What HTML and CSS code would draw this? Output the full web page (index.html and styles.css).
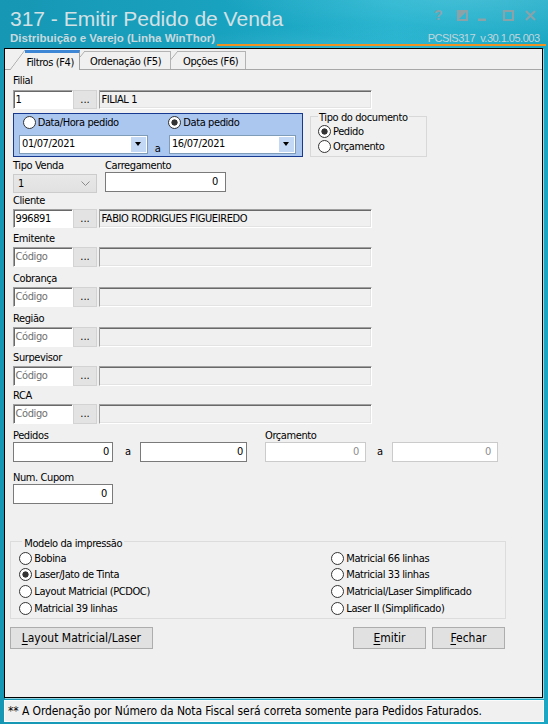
FILE: index.html
```html
<!DOCTYPE html>
<html lang="pt-BR">
<head>
<meta charset="utf-8">
<title>317 - Emitir Pedido de Venda</title>
<link rel="stylesheet" href="styles.css">
</head>
<body>
<div class="window">
  <header class="titlebar">
    <div class="title-row">
      <h1 class="title">317 - Emitir Pedido de Venda</h1>
      <div class="controls">
        <span class="ctl-help">?</span>
        <svg class="ctl ctl-dock" width="11" height="11" viewBox="0 0 11 11"><rect x="1" y="1" width="9" height="9" fill="none" stroke="currentColor" stroke-width="2"/><polygon points="0,0 11,0 0,11" fill="currentColor"/></svg>
        <svg class="ctl ctl-min" width="8" height="11" viewBox="0 0 8 11"><rect x="0" y="8.5" width="8" height="2.5" fill="currentColor"/></svg>
        <svg class="ctl ctl-max" width="11" height="11" viewBox="0 0 11 11"><rect x="1" y="1" width="9" height="9" fill="none" stroke="currentColor" stroke-width="2"/></svg>
        <svg class="ctl ctl-close" width="11" height="11" viewBox="0 0 11 11"><path d="M1 1 L10 10 M10 1 L1 10" stroke="currentColor" stroke-width="2"/></svg>
      </div>
    </div>
    <div class="sub-row">
      <span class="subtitle">Distribuição e Varejo (Linha WinThor)</span>
      <span class="version">PCSIS317&nbsp;&nbsp;v.30.1.05.003</span>
    </div>
  </header>

  <main class="panel">
    <nav class="tabs">
      <div class="tab active">Filtros (F4)</div>
      <div class="tab tab-order">Ordenação (F5)</div>
      <div class="tab tab-options">Opções (F6)</div>
    </nav>

    <section class="page">
      <div class="field f-filial">
        <div class="lbl">Filial</div>
        <div class="lookup short">
          <div class="code">1</div>
          <div class="pick">...</div>
          <div class="desc">FILIAL 1</div>
        </div>
      </div>

      <div class="period-row">
        <div class="period">
          <div class="period-options">
            <div class="radio first"><span class="dot"></span>Data/Hora pedido</div>
            <div class="radio"><span class="dot on"></span>Data pedido</div>
          </div>
          <div class="period-dates">
            <div class="date"><span class="date-val">01/07/2021</span><span class="drop"><span class="arrow"></span></span></div>
            <span class="between">a</span>
            <div class="date date-end"><span class="date-val">16/07/2021</span><span class="drop"><span class="arrow"></span></span></div>
          </div>
        </div>
        <fieldset class="group doc-type">
          <legend>Tipo do documento</legend>
          <div class="radio"><span class="dot on"></span>Pedido</div>
          <div class="radio"><span class="dot"></span>Orçamento</div>
        </fieldset>
      </div>

      <div class="sale-row">
        <div class="col-type">
          <div class="lbl">Tipo Venda</div>
          <div class="combo"><span>1</span>
            <svg class="chev" width="9" height="5" viewBox="0 0 9 5"><polyline points="0.5,0.5 4.5,4.5 8.5,0.5" fill="none" stroke="#8a8a8a" stroke-width="1"/></svg>
          </div>
        </div>
        <div class="col-load">
          <div class="lbl">Carregamento</div>
          <div class="num load">0</div>
        </div>
      </div>

      <div class="field f-cliente">
        <div class="lbl">Cliente</div>
        <div class="lookup short">
          <div class="code">996891</div>
          <div class="pick">...</div>
          <div class="desc">FABIO RODRIGUES FIGUEIREDO</div>
        </div>
      </div>

      <div class="field f-emitente">
        <div class="lbl">Emitente</div>
        <div class="lookup">
          <div class="code empty">Código</div>
          <div class="pick">...</div>
          <div class="desc"></div>
        </div>
      </div>

      <div class="field f-step">
        <div class="lbl">Cobrança</div>
        <div class="lookup">
          <div class="code empty">Código</div>
          <div class="pick">...</div>
          <div class="desc"></div>
        </div>
      </div>

      <div class="field f-step">
        <div class="lbl">Região</div>
        <div class="lookup">
          <div class="code empty">Código</div>
          <div class="pick">...</div>
          <div class="desc"></div>
        </div>
      </div>

      <div class="field f-step">
        <div class="lbl">Surpevisor</div>
        <div class="lookup">
          <div class="code empty">Código</div>
          <div class="pick">...</div>
          <div class="desc"></div>
        </div>
      </div>

      <div class="field f-rca">
        <div class="lbl">RCA</div>
        <div class="lookup">
          <div class="code empty">Código</div>
          <div class="pick">...</div>
          <div class="desc"></div>
        </div>
      </div>

      <div class="range-row">
        <div class="range orders">
          <div class="lbl tight">Pedidos</div>
          <div class="range-inputs">
            <div class="num from">0</div>
            <span class="to">a</span>
            <div class="num until">0</div>
          </div>
        </div>
        <div class="range quotes">
          <div class="lbl tight">Orçamento</div>
          <div class="range-inputs">
            <div class="num off from">0</div>
            <span class="to">a</span>
            <div class="num off until">0</div>
          </div>
        </div>
      </div>

      <div class="field f-cupom">
        <div class="lbl tight">Num. Cupom</div>
        <div class="num coupon">0</div>
      </div>

      <fieldset class="group layout-group">
        <legend>Modelo da impressão</legend>
        <div class="layout-grid">
          <div class="radio"><span class="dot"></span>Bobina</div>
          <div class="radio"><span class="dot on"></span>Laser/Jato de Tinta</div>
          <div class="radio"><span class="dot"></span>Layout Matricial (PCDOC)</div>
          <div class="radio"><span class="dot"></span>Matricial 39 linhas</div>
          <div class="radio"><span class="dot"></span>Matricial 66 linhas</div>
          <div class="radio"><span class="dot"></span>Matricial 33 linhas</div>
          <div class="radio"><span class="dot"></span>Matricial/Laser Simplificado</div>
          <div class="radio"><span class="dot"></span>Laser II (Simplificado)</div>
        </div>
      </fieldset>

      <div class="actions">
        <button class="btn btn-layout"><u>L</u>ayout Matricial/Laser</button>
        <button class="btn btn-emit"><u>E</u>mitir</button>
        <button class="btn btn-close"><u>F</u>echar</button>
      </div>
    </section>
  </main>

  <footer class="status">** A Ordenação por Número da Nota Fiscal será correta somente para Pedidos Faturados.</footer>
</div>
</body>
</html>
```

FILE: styles.css
```css
* { box-sizing: border-box; }

html, body {
  margin: 0;
  padding: 0;
}

body {
  width: 548px;
  height: 724px;
  overflow: hidden;
  font-family: "DejaVu Sans Condensed", "DejaVu Sans", sans-serif;
  font-size: 11px;
  letter-spacing: -0.4px;
  color: #000;
}

/* ---------- window frame ---------- */
.window {
  width: 548px;
  height: 724px;
  display: flex;
  flex-direction: column;
  background:
    radial-gradient(ellipse 330px 70px at 470px -8px, rgba(150, 230, 245, 0.35), rgba(150, 230, 245, 0) 75%),
    radial-gradient(ellipse 260px 40px at 360px 52px, rgba(120, 215, 235, 0.25), rgba(120, 215, 235, 0) 70%),
    linear-gradient(90deg, #1697b4 0%, #19a2bf 40%, #1eafcb 72%, #1ba7c3 100%);
}

.titlebar {
  flex: none;
  height: 48px;
  padding: 8px 0 0 10px;
}

.title-row {
  display: flex;
  justify-content: space-between;
  align-items: flex-start;
  height: 24px;
}

.title {
  margin: 0;
  font: 400 21px/21px "Liberation Sans", Arial, sans-serif;
  letter-spacing: 0;
  color: #d3e1e5;
  white-space: nowrap;
}

.controls {
  display: flex;
  align-items: flex-start;
  margin-right: 12px;
  color: #8ba2a9;
}

.ctl-help {
  font: 700 14px/14px "Liberation Sans", Arial, sans-serif;
  letter-spacing: 0;
}

.ctl { display: block; margin-top: 1.5px; }
.ctl-dock { margin-left: 14px; }
.ctl-min { margin-left: 10.5px; }
.ctl-max { margin-left: 16.5px; }
.ctl-close { margin-left: 11.5px; }

.sub-row {
  display: flex;
  align-items: flex-start;
  margin-right: 2px;
  letter-spacing: 0;
}

.subtitle {
  font: 700 11.5px/12px "Liberation Sans", Arial, sans-serif;
  color: #c8d9de;
  white-space: nowrap;
}

.version {
  flex: 1;
  margin-left: 2px;
  padding-right: 6.5px;
  text-align: right;
  font: 400 11px/12px "Liberation Sans", Arial, sans-serif;
  letter-spacing: -0.5px;
  color: #c3d6dc;
  border-bottom: 2px solid #f0901e;
  white-space: nowrap;
}

/* ---------- main panel ---------- */
.panel {
  flex: none;
  height: 650px;
  margin: 0 5px 0 4px;
  border: 1px solid #000;
  background: #f0f0f0;
  box-shadow: 1px 1px 0 rgba(255, 255, 255, 0.55);
  display: flex;
  flex-direction: column;
}

.tabs {
  flex: none;
  display: flex;
  height: 21px;
  padding-left: 20px;
  border-bottom: 1px solid #a7a7a7;
}

.tab {
  position: relative;
  height: 18px;
  margin-top: 2px;
  padding: 2px 0 0 5px;
  line-height: 15px;
  background: #f0f0f0;
  border-top: 1px solid #b3b3b3;
  border-right: 1px solid #b3b3b3;
  white-space: nowrap;
}

/* slanted left edge of each tab */
.tab::before {
  content: "";
  position: absolute;
  left: -15px;
  top: -1px;
  bottom: 0;
  width: 15px;
  background: linear-gradient(to bottom right, rgba(240, 240, 240, 0) calc(50% - 0.7px), #a9a9a9 50%, #f0f0f0 calc(50% + 0.7px));
}

.tab.active {
  z-index: 3;
  width: 55px;
  height: 20px;
  margin-top: 1px;
  padding: 2px 0 0 1.5px;
  border-top: 3px solid #3d86d6;
  border-right-color: #a0a0a0;
}

.tab.active::before { top: -3px; }

.tab-order {
  z-index: 2;
  width: 86px;
  margin-left: 5px;
}

.tab-options {
  z-index: 1;
  width: 68px;
  margin-left: 7px;
}

.page {
  flex: 1;
  padding: 3px 8px 0 8px;
}

/* ---------- labels and edit controls ---------- */
.lbl {
  line-height: 16px;
  white-space: nowrap;
}

.lbl.tight { line-height: 12px; }

.lookup {
  display: flex;
  height: 20px;
}

.lookup.short { height: 19px; }

.f-filial .lookup { margin-top: 1px; }

.code {
  width: 60px;
  padding-left: 1.5px;
  line-height: 18px;
  background: #fff;
  border: 1px solid;
  border-color: #a0a0a0 #fff #fff #a0a0a0;
  box-shadow: inset 1px 1px 0 #696969;
  white-space: nowrap;
  overflow: hidden;
}

.code.empty { color: #6e6e6e; }

.pick {
  width: 24px;
  text-align: center;
  line-height: 17px;
  background: #e3e3e3;
  border: 1px solid #d3d3d3;
  letter-spacing: 0;
}

.desc {
  width: 273px;
  margin-left: 2px;
  padding-left: 1.5px;
  line-height: 17px;
  background: #f0f0f0;
  border: 1px solid;
  border-color: #a0a0a0 #fff #fff #a0a0a0;
  box-shadow: inset 0 1px 0 #696969, inset -1px -1px 0 #e3e3e3;
  white-space: nowrap;
}

.lookup.short .code,
.lookup.short .desc { line-height: 17px; }

/* ---------- period box ---------- */
.period-row {
  display: flex;
  align-items: flex-start;
}

.period {
  width: 290px;
  height: 44.8px;
  margin-top: 3.5px;
  background: #abc7f0;
  border: 1px solid #17398f;
}

.period-options {
  display: flex;
  height: 13px;
  margin-top: 2px;
  padding-left: 8.7px;
}

.period-options .radio.first { width: 145.6px; }

.period-dates {
  display: flex;
  align-items: flex-start;
  margin-top: 6.5px;
  padding-left: 5.3px;
}

.date {
  display: flex;
  width: 128.4px;
  height: 18.5px;
  background: #fff;
  border: 1px solid #7f9db9;
}

.date-end { width: 126.4px; }

.date-val {
  flex: 1;
  padding-left: 1.7px;
  line-height: 16.5px;
}

.drop {
  display: flex;
  align-items: center;
  justify-content: center;
  width: 15px;
  margin: 0.5px 1px 0.5px 0;
  background: #c3d8f5;
}

.arrow {
  width: 0;
  height: 0;
  border-left: 3.5px solid transparent;
  border-right: 3.5px solid transparent;
  border-top: 4px solid #000;
}

.between {
  width: 21.6px;
  padding-left: 7px;
  margin-top: 6.4px;
  line-height: 15px;
}

/* ---------- group boxes ---------- */
.group {
  margin: 0;
  padding: 0;
  min-width: 0;
  border: 1px solid #d8d8d8;
}

.group legend {
  padding: 2px 1px 0 1px;
  line-height: 13px;
}

.doc-type {
  width: 117px;
  margin-top: -0.5px;
  margin-left: 7px;
  padding: 0 0 1.6px 7px;
}

.doc-type .radio { height: 15.6px; }

.radio {
  display: flex;
  align-items: center;
  white-space: nowrap;
}

.dot {
  flex: none;
  width: 13px;
  height: 13px;
  margin-right: 2px;
  border: 1px solid #333;
  border-radius: 50%;
  background: #fff;
}

.dot.on {
  background: radial-gradient(circle, #333 0 2.8px, #fff 3.4px);
}

/* ---------- sale type / load ---------- */
.sale-row {
  display: flex;
  align-items: flex-start;
  margin-top: 0.5px;
}

.col-type { width: 84px; }

.combo {
  display: flex;
  align-items: center;
  justify-content: space-between;
  height: 19.5px;
  padding: 0 6px 0 4px;
  background: linear-gradient(#e8e8e8, #e1e1e1);
  border: 1px solid #cccccc;
}

.chev { display: block; }

.col-load { margin-left: 8px; }

.num {
  height: 20px;
  padding-right: 6px;
  text-align: right;
  line-height: 18px;
  background: #fff;
  border: 1px solid #7a7a7a;
}

.num.load {
  width: 121px;
  height: 20.5px;
  margin-top: -2px;
  padding-right: 7px;
}

/* ---------- vertical rhythm of the lookups ---------- */
.f-emitente { margin-top: 2.9px; }
.f-step { margin-top: 3.7px; }
.f-rca { margin-top: 1.8px; }

/* ---------- order / quote ranges ---------- */
.range-row {
  display: flex;
  margin-top: 6.4px;
}

.range-inputs {
  display: flex;
  align-items: center;
}

.to {
  line-height: 20px;
}

.orders .from { width: 100px; padding-right: 3px; }
.orders .to { width: 27px; padding-left: 12px; }
.orders .until { width: 107px; padding-right: 3px; }

.quotes { margin-left: 18px; }
.quotes .from { width: 101px; }
.quotes .to { width: 26px; padding-left: 11px; }
.quotes .until { width: 106px; }

.num.off {
  color: #8d8d8d;
  border-color: #cbcbcb;
}

.f-cupom { margin-top: 9.7px; }

.num.coupon {
  width: 100px;
  padding-right: 5px;
}

/* ---------- print layout group ---------- */
.layout-group {
  width: 496px;
  margin: 29.5px 0 0 -3px;
  padding: 0.3px 0 1.3px 8.3px;
  border-color: #dcdcdc;
}

.layout-group legend {
  margin-left: 3px;
  padding: 3px 2px 0 2px;
}

.layout-grid {
  display: grid;
  grid-template-columns: 312px auto;
  grid-template-rows: repeat(4, 16.67px);
  grid-auto-flow: column;
}

/* ---------- buttons ---------- */
.actions {
  display: flex;
  width: 494.7px;
  margin: 8.3px 0 0 -3px;
}

.btn {
  height: 22px;
  padding: 0;
  font-family: "DejaVu Sans Condensed", "DejaVu Sans", sans-serif;
  font-size: 12px;
  letter-spacing: 0;
  color: #000;
  background: #e1e1e1;
  border: 1px solid #adadad;
  border-radius: 0;
}

.btn u { text-underline-offset: 1.5px; }

.btn-layout { width: 142.7px; }
.btn-emit { width: 72.4px; margin-left: auto; }
.btn-close { width: 72.4px; margin-left: 6.6px; }

/* ---------- status bar ---------- */
.status {
  flex: none;
  height: 22px;
  margin: 2px 4px 0 4px;
  padding-left: 3px;
  font-size: 12px;
  line-height: 20px;
  letter-spacing: -0.1px;
  background: #f0f0f0;
  border: 1px solid #fbfbfb;
  white-space: nowrap;
}
```
